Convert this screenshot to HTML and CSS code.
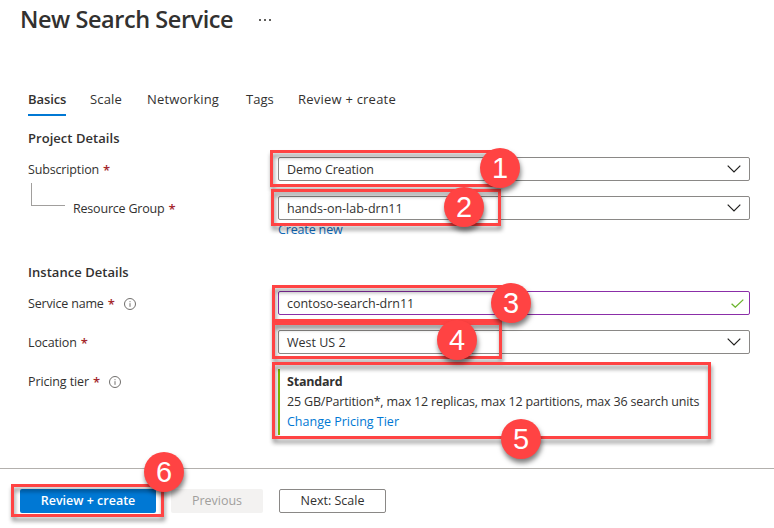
FILE: index.html
```html
<!DOCTYPE html>
<html lang="en">
<head>
<meta charset="utf-8">
<title>New Search Service</title>
<link rel="stylesheet" href="styles.css">
</head>
<body>
<main class="page">
  <header class="head">
    <h1 class="title">New Search Service</h1>
    <div class="more"><i></i><i></i><i></i></div>
  </header>
  <nav class="tabs">
    <span class="tab tab-on">Basics</span>
    <span class="tab tab-scale">Scale</span>
    <span class="tab tab-net">Networking</span>
    <span class="tab tab-tags">Tags</span>
    <span class="tab tab-review">Review + create</span>
  </nav>
  <section class="project">
    <h2 class="sub">Project Details</h2>
    <div class="row">
      <div class="label"><span class="t-subscription">Subscription</span><b class="req">*</b></div>
      <div class="field"><span class="t-demo">Demo Creation</span><svg class="chev" viewBox="0 0 14 8"><path d="M.7.7 7 7 13.3.7"/></svg></div>
    </div>
    <div class="row">
      <div class="label"><i class="elbow"></i><span class="t-group">Resource Group</span><b class="req">*</b></div>
      <div class="field"><span class="t-hands">hands-on-lab-drn11</span><svg class="chev" viewBox="0 0 14 8"><path d="M.7.7 7 7 13.3.7"/></svg></div>
    </div>
    <a class="create">Create new</a>
  </section>
  <section class="instance">
    <h2 class="sub">Instance Details</h2>
    <div class="row">
      <div class="label"><span class="t-service">Service name</span><b class="req">*</b><svg class="info" viewBox="0 0 12 12"><circle cx="6" cy="6" r="5.5"/><path d="M6 5.2v3.6M6 3.2v1"/></svg></div>
      <div class="field valid"><span class="t-contoso">contoso-search-drn11</span><svg class="check" viewBox="0 0 13 9"><path d="M.6 4.7 4.3 8.2 12.3.6"/></svg></div>
    </div>
    <div class="row">
      <div class="label"><span class="t-location">Location</span><b class="req">*</b></div>
      <div class="field"><span class="t-west">West US 2</span><svg class="chev" viewBox="0 0 14 8"><path d="M.7.7 7 7 13.3.7"/></svg></div>
    </div>
    <div class="row">
      <div class="label"><span class="t-pricing">Pricing tier</span><b class="req">*</b><svg class="info" viewBox="0 0 12 12"><circle cx="6" cy="6" r="5.5"/><path d="M6 5.2v3.6M6 3.2v1"/></svg></div>
      <div class="tier">
        <div><strong>Standard</strong></div>
        <div><span class="t-spec">25 GB/Partition*, max 12 replicas, max 12 partitions, max 36 search units</span></div>
        <div><a>Change Pricing Tier</a></div>
      </div>
    </div>
  </section>
  <footer class="foot">
    <div class="btn primary"><span>Review + create</span></div>
    <div class="btn off"><span>Previous</span></div>
    <div class="btn next"><span>Next: Scale</span></div>
  </footer>
  <div class="frame f1"></div><div class="frame f2"></div><div class="frame f3"></div>
  <div class="frame f4"></div><div class="frame f5"></div><div class="frame f6"></div>
  <div class="dot d1">1</div><div class="dot d2">2</div><div class="dot d3">3</div>
  <div class="dot d4">4</div><div class="dot d5">5</div><div class="dot d6">6</div>
</main>
</body>
</html>
```
FILE: styles.css
```css
* { box-sizing: border-box; }
body { margin: 0; background: #fff; color: #323130; font: 12.5px/20px "Open Sans", "Noto Sans", sans-serif; overflow: hidden; }
.page { position: relative; width: 774px; height: 528px; overflow: hidden; }
.page span, .page a, .page strong { white-space: nowrap; }
.head { display: flex; height: 88px; padding-left: 20px; }
.title { margin: 3px 0 0; width: 239px; font-size: 23.5px; line-height: 32px; font-weight: 600; letter-spacing: -.44px; white-space: nowrap; }
.more { display: flex; gap: 3px; padding-top: 19px; }
.more i { width: 2px; height: 2px; background: #605e5c; }
.tabs { display: flex; height: 40px; padding-left: 28px; }
.tab { height: 28px; line-height: 22px; font-size: 13px; }
.tab-on { width: 38px; font-weight: 600; letter-spacing: -.1px; border-bottom: 2px solid #0078d4; margin-right: 24px; }
.tab-scale { width: 57px; letter-spacing: .15px; }
.tab-net { width: 99px; letter-spacing: .2px; }
.tab-tags { width: 52px; }
.tab-review { letter-spacing: .22px; }
.project { height: 134px; padding-left: 28px; }
.instance { height: 206px; padding-left: 28px; }
.sub { margin: 0; height: 29px; font-size: 13px; line-height: 20px; font-weight: 600; letter-spacing: .04px; }
.row { display: flex; width: 722px; height: 24px; margin-bottom: 15px; }
.label { display: flex; width: 250px; height: 24px; line-height: 26px; }
.req { margin-left: 4px; color: #a4262c; font-weight: 600; font-size: 13px; }
.elbow { width: 34px; height: 23px; margin: -13px 8px 0 3px; border: solid #a19f9d; border-width: 0 0 1px 1px; }
.t-subscription { letter-spacing: -.15px; }
.t-group { letter-spacing: -.2px; }
.t-service { letter-spacing: -.18px; }
.t-location { letter-spacing: -.12px; }
.t-pricing { letter-spacing: -.12px; }
.field { display: flex; flex: 1; align-items: center; justify-content: space-between; padding: 0 8px; border: 1px solid #8a8886; border-radius: 2px; }
.field span { padding-top: 2px; }
.t-demo { letter-spacing: -.1px; }
.t-contoso { letter-spacing: -.05px; }
.valid { border-color: #8b2ea8; padding-right: 5px; }
.chev { width: 14px; height: 8px; fill: none; stroke: #201f1e; stroke-width: 1.2; }
.check { width: 13px; height: 9px; fill: none; stroke: #6bb42d; stroke-width: 1.3; }
.info { width: 12px; height: 12px; margin: 7px 0 0 9px; fill: none; stroke: #706e6c; stroke-width: 1; }
.create { display: block; margin-top: -15px; line-height: 20px; padding-left: 250px; color: #0f6cbd; letter-spacing: -.15px; }
.tier { width: 432px; height: 66px; padding: 3px 0 0 7px; border-left: 2px solid #7fba00; }
.tier strong { font-weight: 700; letter-spacing: -.2px; }
.tier a { color: #0078d4; }
.t-spec { letter-spacing: -.175px; }
.foot { display: flex; height: 60px; padding: 20px 0 0 20px; border-top: 1px solid #b3b0ad; }
.btn { display: flex; height: 24px; align-items: center; justify-content: center; border-radius: 2px; }
.primary { width: 136px; margin-right: 15px; background: #0078d4; color: #fff; font-weight: 600; }
.off { width: 92px; margin-right: 16px; background: #f3f2f1; color: #a19f9d; }
.next { width: 107px; border: 1px solid #8a8886; }
.frame { position: absolute; border: 3px solid #ff4343; filter: drop-shadow(1px 4px 2px rgba(0,0,0,.45)); }
.f1 { left: 270px; top: 150px; width: 230px; height: 37px; }
.f2 { left: 271px; top: 189px; width: 230px; height: 37px; }
.f3 { left: 272px; top: 285px; width: 230px; height: 37px; }
.f4 { left: 272px; top: 322px; width: 230px; height: 37px; }
.f5 { left: 272px; top: 362px; width: 439px; height: 77px; }
.f6 { left: 11px; top: 484px; width: 153px; height: 33px; }
.dot { position: absolute; width: 40px; height: 40px; border-radius: 50%; background: #ff4343; color: #fff; font: 29px/40px "Liberation Sans", Arial, sans-serif; text-align: center; box-shadow: 1px 4px 5px rgba(0,0,0,.5); }
.d1 { left: 480px; top: 148px; }
.d2 { left: 444px; top: 187px; }
.d3 { left: 491px; top: 283px; }
.d4 { left: 437px; top: 320px; }
.d5 { left: 501px; top: 419px; }
.d6 { left: 144px; top: 452px; }
```
